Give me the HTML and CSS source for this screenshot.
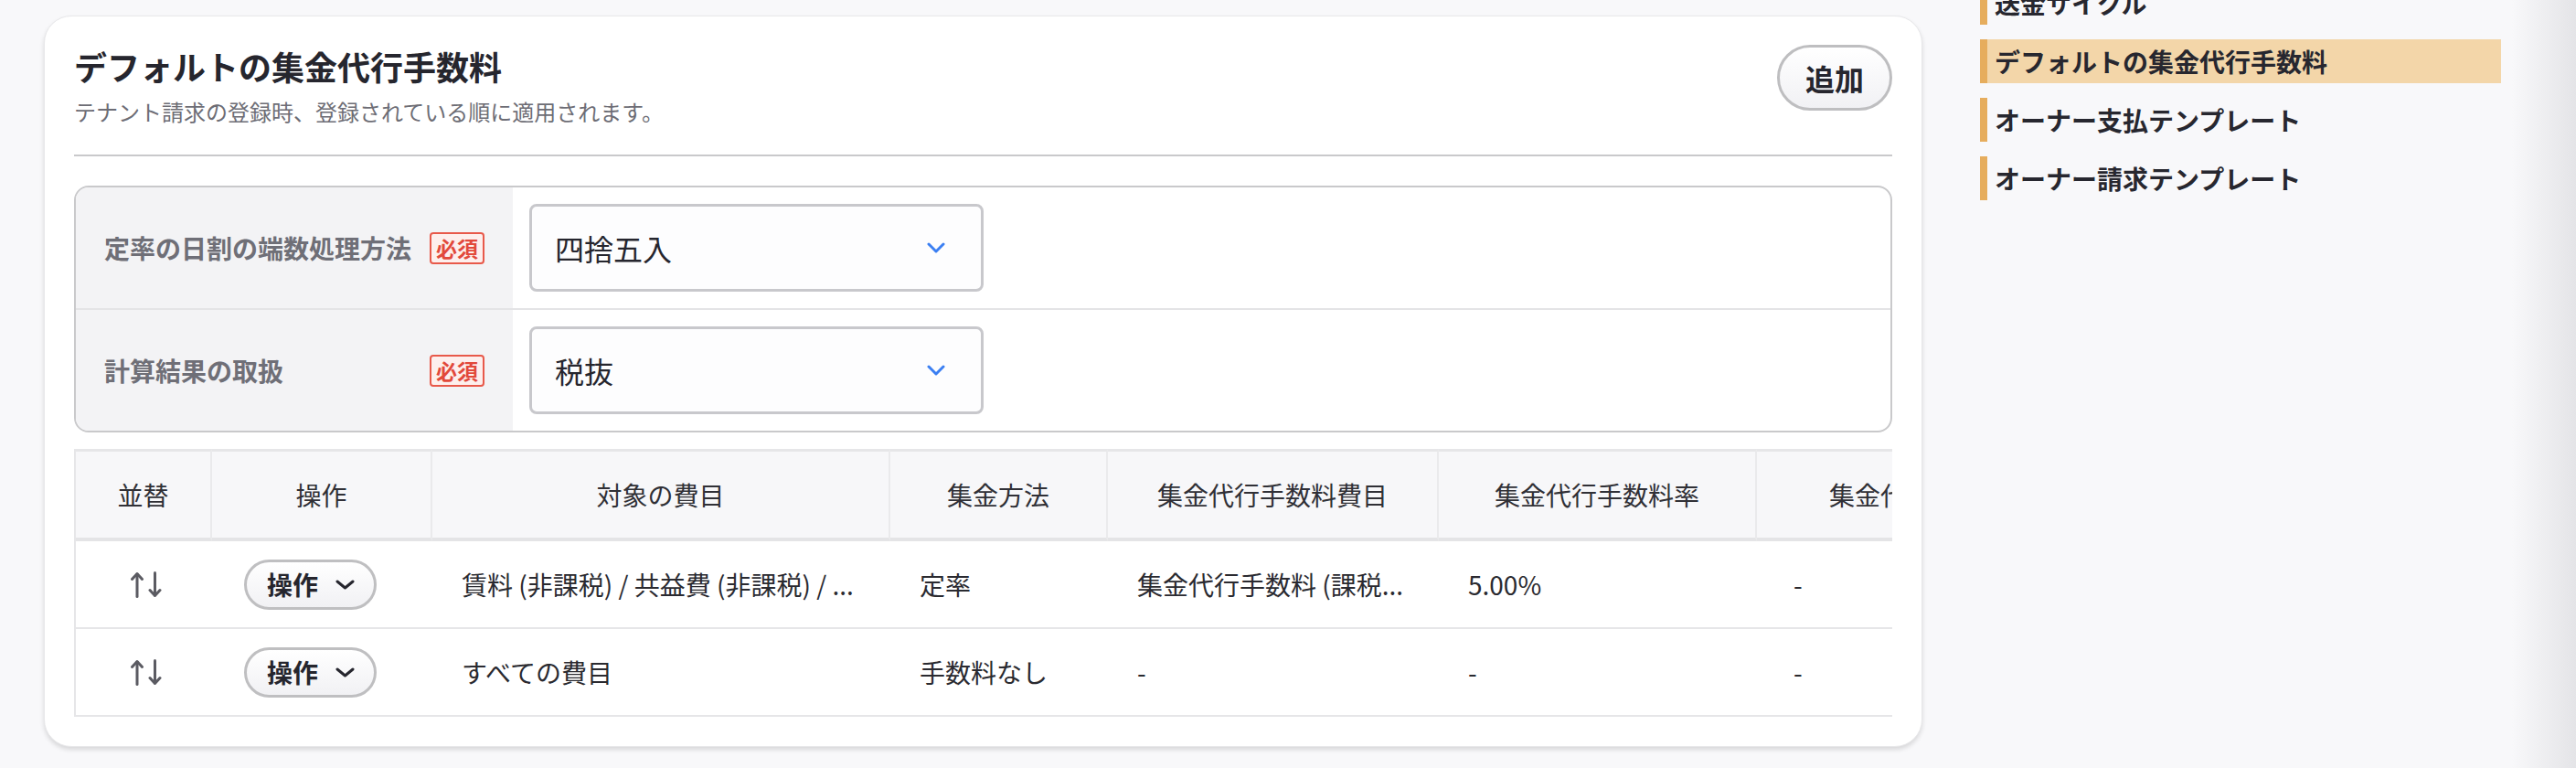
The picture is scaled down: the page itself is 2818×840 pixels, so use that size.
FILE: index.html
```html
<!DOCTYPE html>
<html lang="ja">
<head>
    <meta charset="UTF-8">
    <title>デフォルトの集金代行手数料</title>
    <link rel="stylesheet" href="styles.css">
</head>
<body>
<div class="page">
    <section class="card">
        <div class="card-head">
            <div>
                <h2 class="card-title">デフォルトの集金代行手数料</h2>
                <p class="card-desc">テナント請求の登録時、登録されている順に適用されます。</p>
            </div>
            <button class="btn-add">追加</button>
        </div>

        <div class="form-box">
            <div class="form-row">
                <div class="form-label"><span>定率の日割の端数処理方法</span><span class="req">必須</span></div>
                <div class="form-field">
                    <div class="select">
                        <span>四捨五入</span>
                        <svg width="20" height="12" viewBox="0 0 20 12"><polyline points="2,2 10,10 18,2" fill="none" stroke="#3b7ff2" stroke-width="3" stroke-linecap="round" stroke-linejoin="round"/></svg>
                    </div>
                </div>
            </div>
            <div class="form-row">
                <div class="form-label"><span>計算結果の取扱</span><span class="req">必須</span></div>
                <div class="form-field">
                    <div class="select">
                        <span>税抜</span>
                        <svg width="20" height="12" viewBox="0 0 20 12"><polyline points="2,2 10,10 18,2" fill="none" stroke="#3b7ff2" stroke-width="3" stroke-linecap="round" stroke-linejoin="round"/></svg>
                    </div>
                </div>
            </div>
        </div>

        <div class="table-wrap">
            <table class="fee-table">
                <colgroup>
                    <col style="width:149px">
                    <col style="width:241px">
                    <col style="width:501px">
                    <col style="width:238px">
                    <col style="width:362px">
                    <col style="width:348px">
                    <col style="width:440px">
                    <col style="width:300px">
                </colgroup>
                <thead>
                <tr>
                    <th>並替</th>
                    <th>操作</th>
                    <th>対象の費目</th>
                    <th>集金方法</th>
                    <th>集金代行手数料費目</th>
                    <th>集金代行手数料率</th>
                    <th>集金代行手数料上限額</th>
                    <th>備考</th>
                </tr>
                </thead>
                <tbody>
                <tr>
                    <td class="sort">
                        <svg width="34" height="29" viewBox="0 0 34 29"><g fill="none" stroke="#5b5b62" stroke-width="3" stroke-linecap="round" stroke-linejoin="round"><line x1="7" y1="3" x2="7" y2="27.5"/><polyline points="1.5,8.5 7,2.5 12.5,8.5"/><line x1="26.5" y1="1.5" x2="26.5" y2="26"/><polyline points="21,20.5 26.5,26.5 32,20.5"/></g></svg>
                    </td>
                    <td class="op">
                        <button class="btn-op">操作
                            <svg width="21" height="11" viewBox="0 0 21 11"><polyline points="2,2 10.5,9 19,2" fill="none" stroke="#26262e" stroke-width="3" stroke-linecap="round" stroke-linejoin="round"/></svg>
                        </button>
                    </td>
                    <td>賃料 (非課税) / 共益費 (非課税) / ...</td>
                    <td>定率</td>
                    <td>集金代行手数料 (課税...</td>
                    <td>5.00%</td>
                    <td class="dash">-</td>
                    <td>-</td>
                </tr>
                <tr>
                    <td class="sort">
                        <svg width="34" height="29" viewBox="0 0 34 29"><g fill="none" stroke="#5b5b62" stroke-width="3" stroke-linecap="round" stroke-linejoin="round"><line x1="7" y1="3" x2="7" y2="27.5"/><polyline points="1.5,8.5 7,2.5 12.5,8.5"/><line x1="26.5" y1="1.5" x2="26.5" y2="26"/><polyline points="21,20.5 26.5,26.5 32,20.5"/></g></svg>
                    </td>
                    <td class="op">
                        <button class="btn-op">操作
                            <svg width="21" height="11" viewBox="0 0 21 11"><polyline points="2,2 10.5,9 19,2" fill="none" stroke="#26262e" stroke-width="3" stroke-linecap="round" stroke-linejoin="round"/></svg>
                        </button>
                    </td>
                    <td>すべての費目</td>
                    <td>手数料なし</td>
                    <td>-</td>
                    <td>-</td>
                    <td class="dash">-</td>
                    <td>-</td>
                </tr>
                </tbody>
            </table>
        </div>
    </section>

    <nav class="side">
        <ul>
            <li>送金サイクル</li>
            <li class="cur">デフォルトの集金代行手数料</li>
            <li>オーナー支払テンプレート</li>
            <li>オーナー請求テンプレート</li>
        </ul>
    </nav>

    <div class="edge"></div>
</div>
</body>
</html>
```

FILE: styles.css
```css
html, body {
    margin: 0;
    padding: 0;
}

body {
    background: #f8f8fa;
    color: #26262e;
    font-family: "Noto Sans CJK JP", "Noto Sans", sans-serif;
    overflow: hidden;
}

ul, li {
    list-style-type: none;
    margin: 0;
    padding: 0;
}

button {
    font-family: inherit;
    cursor: pointer;
}

.page {
    display: flex;
    align-items: flex-start;
    height: 840px;
    padding-left: 48px;
    box-sizing: border-box;
}

/* card */
.card {
    width: 2055px;
    flex-shrink: 0;
    box-sizing: border-box;
    margin-top: 17px;
    padding: 32px;
    background: #fff;
    border: 1px solid #e8e8ea;
    border-radius: 30px;
    box-shadow: 0 3px 5px rgba(0, 0, 0, 0.13);
}

.card-head {
    display: flex;
    justify-content: space-between;
    align-items: flex-start;
    padding-bottom: 31px;
    border-bottom: 2px solid #c9c9cb;
}

.card-title {
    margin: 0;
    font-size: 36px;
    line-height: 44px;
    font-weight: bold;
    color: #26262e;
}

.card-desc {
    margin: 12px 0 0;
    font-size: 24px;
    line-height: 32px;
    color: #6d6d75;
}

.btn-add {
    width: 126px;
    height: 72px;
    margin-top: -1px;
    padding: 0;
    border: 3px solid #bebec0;
    border-radius: 36px;
    background: linear-gradient(#ffffff, #f1f1f4);
    font-size: 32px;
    font-weight: bold;
    color: #26262e;
}

/* form */
.form-box {
    margin-top: 32px;
    border: 2px solid #c9c9cb;
    border-radius: 16px;
    overflow: hidden;
}

.form-row {
    display: grid;
    grid-template-columns: 478px 1fr;
}

.form-row + .form-row {
    border-top: 2px solid #e4e4e6;
}

.form-label {
    display: flex;
    justify-content: space-between;
    align-items: center;
    padding: 0 31px;
    background: #f3f3f5;
    font-size: 28px;
    font-weight: bold;
    color: #6f6f77;
}

.req {
    padding: 0 5px;
    line-height: 31px;
    font-size: 23px;
    font-weight: bold;
    color: #e2493b;
    background: #fdefed;
    border: 2px solid #e8594a;
    border-radius: 4px;
}

.form-field {
    padding: 18px 0 18px 18px;
}

.select {
    display: flex;
    justify-content: space-between;
    align-items: center;
    width: 497px;
    height: 96px;
    box-sizing: border-box;
    padding: 0 39px 0 25px;
    border: 3px solid #c8c8cc;
    border-radius: 8px;
    background: #fdfdfe;
    font-size: 32px;
    color: #26262e;
}

/* table */
.table-wrap {
    margin-top: 18px;
    overflow: hidden;
}

.fee-table {
    table-layout: fixed;
    width: 2551px;
    border-collapse: separate;
    border-spacing: 0;
    border-left: 2px solid #e6e6e8;
    font-size: 28px;
}

.fee-table th {
    height: 94px;
    padding: 0;
    background: #f7f7f9;
    border-top: 3px solid #e6e6e8;
    border-bottom: 4px solid #e4e4e6;
    border-right: 2px solid #eaeaec;
    font-weight: normal;
    color: #303036;
    text-align: center;
    white-space: nowrap;
}

.fee-table td {
    height: 94px;
    padding: 0 32px;
    border-bottom: 2px solid #e6e6e8;
    color: #2a2a30;
    white-space: nowrap;
    overflow: hidden;
}

.fee-table td.sort {
    padding: 0;
    text-align: center;
}

.fee-table td.sort svg {
    display: block;
    margin: 0 auto;
    transform: translateX(2px);
}

.fee-table td.op {
    padding: 0 0 0 35px;
}

.fee-table td.dash {
    padding-left: 40px;
}

.btn-op {
    display: inline-flex;
    align-items: center;
    gap: 19px;
    height: 55px;
    padding: 0 21px 0 22px;
    border: 3px solid #bfbfc1;
    border-radius: 28px;
    background: linear-gradient(#ffffff, #f1f1f4);
    font-size: 28px;
    font-weight: bold;
    color: #26262e;
}

/* side menu */
.side {
    width: 570px;
    flex-shrink: 0;
    margin-left: 63px;
    margin-top: -21px;
}

.side ul {
    display: flex;
    flex-direction: column;
    gap: 16px;
}

.side li {
    height: 48px;
    line-height: 48px;
    padding-left: 8px;
    border-left: 8px solid #e6ad5d;
    font-size: 28px;
    font-weight: bold;
    color: #27272f;
    white-space: nowrap;
}

.side li.cur {
    background: #f3d6a9;
}

.edge {
    flex: 1;
    align-self: stretch;
    background: linear-gradient(to right, rgba(229, 229, 232, 0) 15%, #e4e4e7 100%);
}
```
